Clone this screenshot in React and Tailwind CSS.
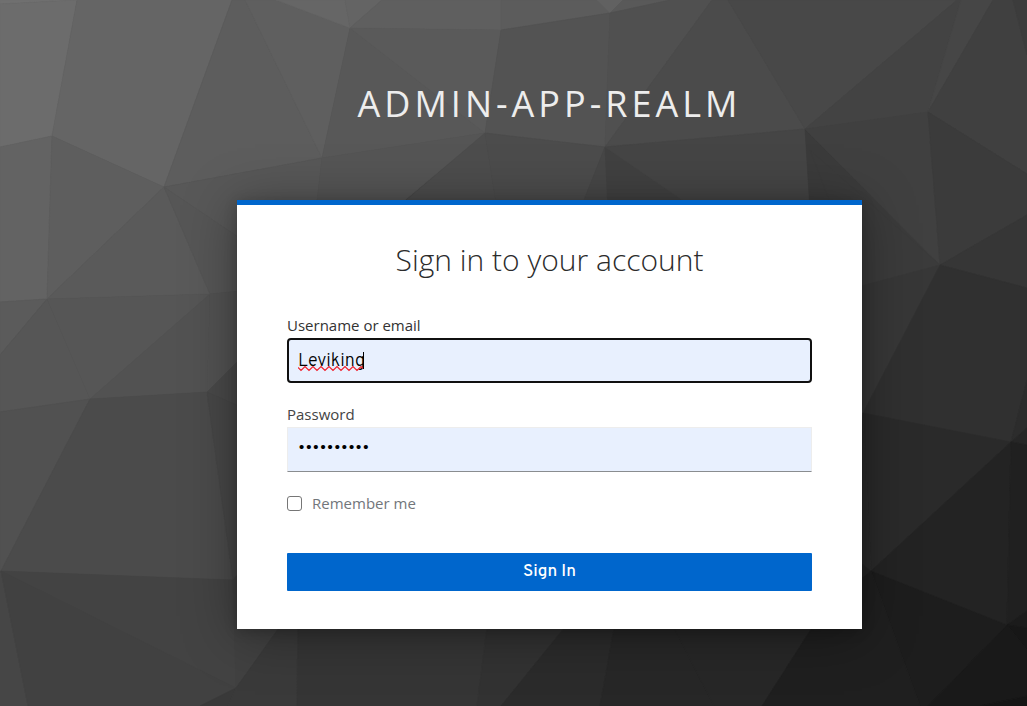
import { useState } from "react";

const facets = [
  ["0,0 77,0 0,4", "#707070"],
  ["0,4 77,0 52,136 0,147", "#6c6c6c"],
  ["77,0 232,0 164,187 52,136", "#656565"],
  ["0,147 52,136 47,299 0,302", "#636363"],
  ["52,136 164,187 47,299", "#5e5e5e"],
  ["232,0 245,0 322,158 164,187", "#5d5d5d"],
  ["245,0 276,0 350,28 322,158", "#5f5f5f"],
  ["276,0 345,0 350,28", "#666666"],
  ["345,0 382,0 350,28", "#646464"],
  ["382,0 501,0 501,30 350,28", "#5f5f5f"],
  ["501,0 597,0 610,13 501,30", "#5c5c5c"],
  ["597,0 623,0 610,13", "#616161"],
  ["623,0 670,0 610,13", "#595959"],
  ["350,28 485,133 322,158", "#585858"],
  ["350,28 501,30 485,133", "#5a5a5a"],
  ["501,30 610,13 605,147 485,133", "#535353"],
  ["610,13 670,0 712,0 605,147", "#505050"],
  ["712,0 728,0 805,129 605,147", "#4b4b4b"],
  ["728,0 957,0 805,129", "#484848"],
  ["957,0 961,0 928,112 805,129", "#434343"],
  ["961,0 993,0 928,112", "#464646"],
  ["993,0 1013,0 1027,55 1027,174 928,112", "#404040"],
  ["1013,0 1027,0 1027,55", "#3c3c3c"],
  ["164,187 322,158 316,210 250,245", "#585858"],
  ["322,158 485,133 405,200 316,210", "#555555"],
  ["485,133 497,210 395,210", "#4d4d4d"],
  ["485,133 605,147 580,210 497,210", "#4c4c4c"],
  ["605,147 608,210 580,210", "#474747"],
  ["605,147 697,210 608,210", "#414141"],
  ["605,147 805,129 810,210 697,210", "#454545"],
  ["805,129 940,265 810,210", "#3b3b3b"],
  ["805,129 928,112 940,265", "#404040"],
  ["928,112 1027,174 1027,215 940,265", "#3b3b3b"],
  ["940,265 1027,215 1027,288", "#363636"],
  ["810,150 940,265 862,286", "#3b3b3b"],
  ["940,265 863,413 850,289", "#373737"],
  ["940,265 1027,288 1027,380 1011,442 863,413", "#303030"],
  ["1027,380 1027,428 1011,442", "#2c2c2c"],
  ["1011,442 1027,428 1027,445", "#262626"],
  ["863,413 1011,442 871,571", "#2a2a2a"],
  ["863,413 871,571 850,555", "#2b2b2b"],
  ["871,571 850,555 850,590", "#252525"],
  ["1011,442 1007,625 871,571", "#232323"],
  ["1011,442 1027,445 1027,611 1007,625", "#202020"],
  ["871,571 1007,625 928,706 920,706", "#1d1d1d"],
  ["1007,625 1027,611 1027,628", "#1b1b1b"],
  ["1007,625 1027,628 1027,650", "#171717"],
  ["1007,625 1027,650 1027,696 980,706 928,706", "#191919"],
  ["1027,696 1027,706 980,706", "#151515"],
  ["164,187 210,294 47,299", "#5a5a5a"],
  ["164,187 250,245 250,290 210,294", "#565656"],
  ["0,302 47,299 0,355", "#5b5b5b"],
  ["47,299 90,399 0,412 0,355", "#565656"],
  ["47,299 210,294 90,399", "#565656"],
  ["210,294 207,392 90,399", "#525252"],
  ["210,294 250,290 250,349 207,392", "#525252"],
  ["207,392 250,349 250,411", "#494949"],
  ["0,412 90,399 1,571 0,571", "#515151"],
  ["90,399 207,392 233,580 1,571", "#4b4b4b"],
  ["207,392 250,411 250,562 233,580", "#474747"],
  ["0,571 1,571 28,706 0,706", "#464646"],
  ["1,571 233,580 236,688", "#434343"],
  ["1,571 236,688 200,706 28,706", "#414141"],
  ["233,580 250,562 290,615 236,688", "#414141"],
  ["236,688 228,706 200,706", "#393939"],
  ["236,688 290,612 298,612 297,706 228,706", "#3a3a3a"],
  ["298,612 489,612 477,706 297,706", "#353535"],
  ["489,612 577,612 501,706 477,706", "#323232"],
  ["577,612 617,612 600,706 501,706", "#2b2b2b"],
  ["617,612 666,612 714,706 600,706", "#272727"],
  ["666,612 822,612 762,706 714,706", "#272727"],
  ["822,612 871,571 920,706 762,706", "#1f1f1f"],
];

function Backdrop() {
  return (
    <svg
      aria-hidden="true"
      viewBox="0 0 1027 706"
      preserveAspectRatio="xMidYMid slice"
      className="absolute inset-0 -z-10 h-full w-full"
    >
      <rect width="1027" height="706" fill="#444444" />
      {facets.map(([points, fill]) => (
        <polygon key={points} points={points} fill={fill} stroke={fill} strokeWidth="0.6" />
      ))}
    </svg>
  );
}

function SpellingMark() {
  return (
    <svg
      aria-hidden="true"
      viewBox="0 0 68 22"
      className="pointer-events-none absolute top-3 left-[11px] h-[22px] w-[68px]"
      fill="none"
    >
      <path
        d="M0 17.5l3 3 4-4 4 4 4-4 4 4 4-4 4 4 4-4 4 4 4-4 4 4 4-4 4 4 4-4 4 4 4-4 2 2"
        stroke="#f0202c"
        strokeWidth="1.2"
      />
      <path d="M65.5 2v17" stroke="#000" />
    </svg>
  );
}

export default function App() {
  const [username, setUsername] = useState("Leviking");
  const [password, setPassword] = useState("levikings1");
  const [remember, setRemember] = useState(false);

  return (
    <main className="relative isolate flex min-h-screen flex-col items-center overflow-hidden pt-20 pb-[77px] pl-[72px] font-['Open_Sans',sans-serif]">
      <Backdrop />
      <h1 className="mb-[72px] text-center text-4xl leading-12 tracking-[4px] text-[#ededed] uppercase">
        admin-app-realm
      </h1>
      <section className="w-full max-w-[625px] border-t-[5px] border-[#0066cc] bg-white px-[50px] pt-[35px] pb-[38px] shadow-[0_5px_50px_rgba(0,0,0,0.35),0_2px_12px_rgba(0,0,0,0.2)]">
        <h2 className="mb-[34px] text-center text-3xl leading-10 font-light text-[#2b2b2b]">
          Sign in to your account
        </h2>
        <form onSubmit={(e) => e.preventDefault()}>
          <div className="mb-5">
            <label htmlFor="username" className="block pb-0.5 text-[15px] leading-[22px] text-[#333]">
              Username or email
            </label>
            <div className="relative">
              <input
                id="username"
                type="text"
                value={username}
                onChange={(e) => setUsername(e.target.value)}
                spellCheck={false}
                className="block h-[45px] w-full rounded-[4px] border-2 border-[#101010] bg-[#e8f0fe] px-[9px] pt-0.5 font-[Overpass,Roboto,sans-serif] text-lg font-light text-black outline-none"
              />
              {username === "Leviking" && <SpellingMark />}
            </div>
          </div>
          <div className="mb-5">
            <label htmlFor="password" className="block pb-0.5 text-[15px] leading-[22px] text-[#444]">
              Password
            </label>
            <input
              id="password"
              type="password"
              value={password}
              onChange={(e) => setPassword(e.target.value)}
              className="block h-[45px] w-full border border-[#ededed] border-b-[#8a8d90] bg-[#e8f0fe] px-[10px] pb-0.5 font-[Overpass,Roboto,sans-serif] text-[17px] text-black outline-none"
            />
          </div>
          <label className="mb-[39px] flex items-center gap-[10px] text-[15px] leading-[22px] text-[#72767b]">
            <input
              type="checkbox"
              checked={remember}
              onChange={(e) => setRemember(e.target.checked)}
              className="size-[15px] appearance-none rounded-[3px] border border-[#767676] bg-white checked:bg-[#0066cc]"
            />
            Remember me
          </label>
          <button
            type="submit"
            className="block h-[38px] w-full rounded-[1px] bg-[#0066cc] pt-0.5 font-[Overpass,Roboto,sans-serif] text-[17px] font-medium text-white"
          >
            Sign In
          </button>
        </form>
      </section>
    </main>
  );
}
